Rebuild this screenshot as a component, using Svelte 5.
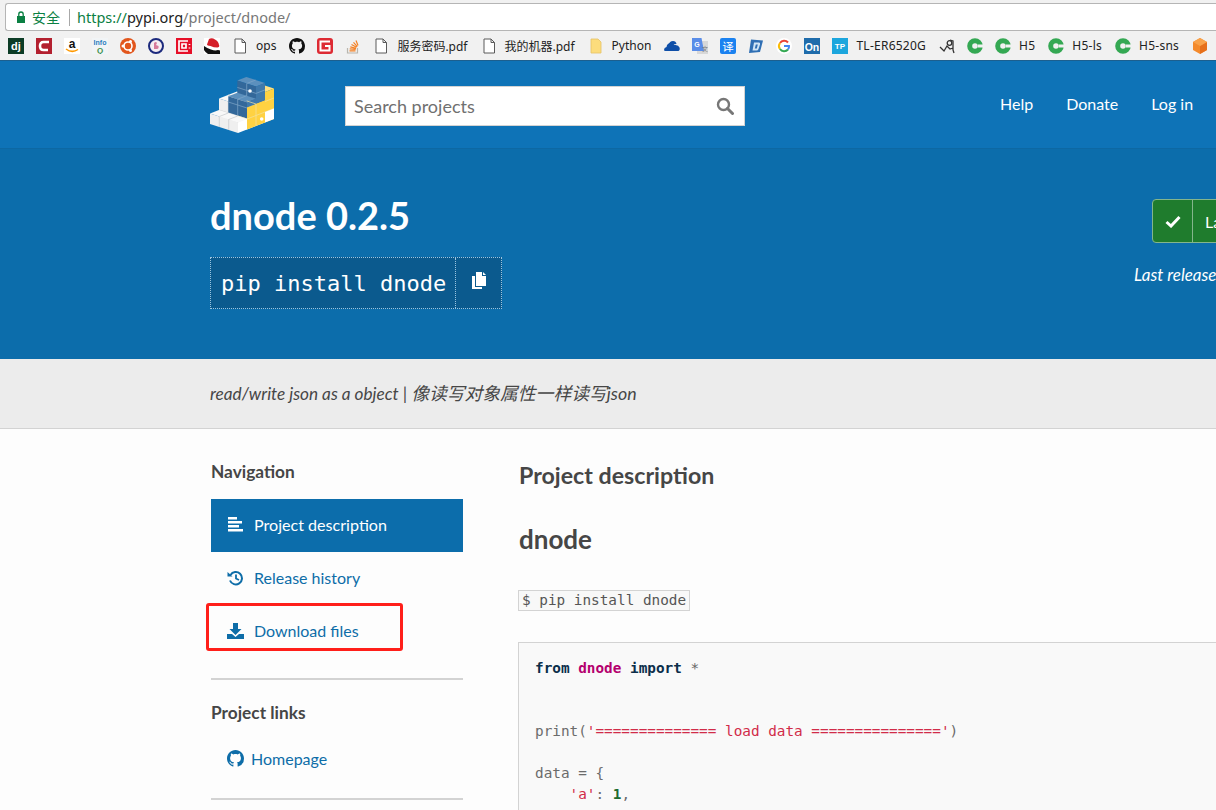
<script>
  const doc = `<svg width="16" height="16" viewBox="0 0 16 16"><path d="M3 1h7l3.500 3.500V15H3z M10 1v3.500h3.500" fill="#fff" stroke="#5a5a5a" stroke-width="1"/></svg>`
  const cIcon = `<svg width="16" height="16" viewBox="0 0 16 16"><circle cx="8" cy="8" r="5.300" fill="none" stroke="#34a853" stroke-width="5"/><rect x="11" y="6.500" width="5" height="3" fill="#f1f1f1"/></svg>`

  const bookmarks = [
    { svg: `<svg width="16" height="16" viewBox="0 0 16 16"><rect width="16" height="16" fill="#0c3c26"/><text x="8" y="12" font-size="11" font-weight="700" text-anchor="middle" fill="#fff" font-family="Liberation Sans">dj</text></svg>` },
    { svg: `<svg width="16" height="16" viewBox="0 0 16 16"><rect width="16" height="16" fill="#b3202f"/><path d="M13 4H7.500Q4 4 4 8t3.500 4H12" fill="none" stroke="#fff" stroke-width="2.600"/></svg>` },
    { svg: `<svg width="16" height="16" viewBox="0 0 16 16"><rect width="16" height="16" fill="#fff"/><text x="8" y="9.500" font-size="12" font-weight="700" text-anchor="middle" fill="#111" font-family="Liberation Sans">a</text><path d="M2 11q6 4.500 12 .5" fill="none" stroke="#f90" stroke-width="1.500"/></svg>` },
    { svg: `<svg width="16" height="16" viewBox="0 0 16 16"><rect width="16" height="16" fill="#f1f4f6"/><text x="8" y="7" font-size="7" font-weight="700" text-anchor="middle" fill="#2c7fc0" font-family="Liberation Sans">Info</text><text x="8" y="15" font-size="8" font-weight="700" text-anchor="middle" fill="#3a8f4a" font-family="Liberation Sans">Q</text></svg>` },
    { svg: `<svg width="16" height="16" viewBox="0 0 16 16"><circle cx="8" cy="8" r="8" fill="#e2561d"/><circle cx="8" cy="8" r="4" fill="none" stroke="#fff" stroke-width="1.600"/><circle cx="3" cy="8" r="1.500" fill="#fff"/><circle cx="10.500" cy="3.600" r="1.500" fill="#fff"/><circle cx="10.500" cy="12.400" r="1.500" fill="#fff"/></svg>` },
    { svg: `<svg width="16" height="16" viewBox="0 0 16 16"><circle cx="8" cy="8" r="7" fill="#f5eef2" stroke="#1c2a7d" stroke-width="2"/><path d="M6 11V5q2-2 3 0l-1 2 2.500 1q.5 3-1.500 3z" fill="#d77a9a"/></svg>` },
    { svg: `<svg width="16" height="16" viewBox="0 0 16 16"><rect width="16" height="16" fill="#e60f28"/><path d="M12 3H3v10h9M6 6h4v4H6zM13.500 6v1M13.500 9.500v1" fill="none" stroke="#fff" stroke-width="1.700"/></svg>` },
    { svg: `<svg width="16" height="16" viewBox="0 0 16 16"><rect width="16" height="16" fill="#fff"/><path d="M0 8q3 2 7 3.500t7 .5l2 .5V16H4q-3-2-4-4z" fill="#111"/><path d="M3 6.500 5 1q3-1.500 6 .5 3.500 1.500 4 5.500 1 2-1.500 2.500-4 0-7-1.500Q3 7.500 3 6.500z" fill="#d5202a"/></svg>` },
    { svg: doc, label: 'ops' },
    { svg: `<svg width="16" height="16" viewBox="0 0 16 16"><path fill="#111" d="M8 0C3.580 0 0 3.580 0 8c0 3.540 2.290 6.530 5.470 7.590.4.070.55-.17.55-.38 0-.19-.01-.82-.01-1.490-2.010.37-2.530-.49-2.690-.94-.09-.23-.48-.94-.82-1.130-.28-.15-.68-.52-.01-.53.63-.01 1.080.58 1.230.82.72 1.210 1.870.87 2.330.66.07-.52.28-.87.51-1.070-1.780-.2-3.640-.89-3.640-3.950 0-.87.31-1.590.82-2.150-.08-.2-.36-1.020.08-2.120 0 0 .67-.21 2.200.82.64-.18 1.320-.27 2-.27.68 0 1.360.09 2 .27 1.530-1.040 2.200-.82 2.200-.82.44 1.100.16 1.920.08 2.120.51.56.82 1.270.82 2.150 0 3.070-1.870 3.750-3.650 3.950.29.25.54.73.54 1.480 0 1.070-.01 1.930-.01 2.200 0 .21.15.46.55.38A8.013 8.013 0 0016 8c0-4.420-3.580-8-8-8z"/></svg>` },
    { svg: `<svg width="16" height="16" viewBox="0 0 16 16"><rect width="16" height="16" rx="3" fill="#dd2a33"/><path d="M13 3.500H3.500v9h9V8H8" fill="none" stroke="#fff" stroke-width="2"/></svg>` },
    { svg: `<svg width="16" height="16" viewBox="0 0 16 16"><path d="M2.500 10v5h10v-5" fill="none" stroke="#b9b6ae" stroke-width="1.200"/><path d="M4.500 12.800h6M4.700 10.800l6 .6M5.300 8.800l5.800 1.500M6.500 6.500l5 2.800M8.500 4.300l3.800 4.300M11 2.500l2 5" fill="none" stroke="#f48024" stroke-width="1.200"/></svg>` },
    { svg: doc, label: '服务密码.pdf' },
    { svg: doc, label: '我的机器.pdf' },
    { svg: `<svg width="16" height="16" viewBox="0 0 16 16"><path d="M3 1h7l3 3v11H3z" fill="#fcdc7c" stroke="#e6c266" stroke-width=".8"/></svg>`, label: 'Python' },
    { svg: `<svg width="16" height="16" viewBox="0 0 16 16"><path d="M0 12q0-2.500 2.500-3 .5-4 4.500-4 2.500 0 3.500 2 4-.5 5 2.500.8 3-1 3.500H1.500Q0 13 0 12z" fill="#0f4fa8"/><path d="M4.500 7Q5.500 3 9 3q3 0 3.500 3" fill="#0f4fa8"/></svg>` },
    { svg: `<svg width="16" height="16" viewBox="0 0 16 16"><rect x="5" y="3" width="11" height="13" fill="#d8d8d8"/><path d="M0 0h9.500l2.500 13H0z" fill="#5a8de8"/><text x="5" y="9" font-size="7" font-weight="700" text-anchor="middle" fill="#fff" font-family="Liberation Sans">G</text><text x="13" y="13" font-size="6" text-anchor="middle" fill="#777" font-family="Noto Sans CJK SC">文</text></svg>` },
    { svg: `<svg width="16" height="16" viewBox="0 0 16 16"><rect width="16" height="16" rx="2" fill="#1b82f0"/><text x="8" y="12.500" font-size="11.500" text-anchor="middle" fill="#fff" font-family="Noto Sans CJK SC">译</text></svg>` },
    { svg: `<svg width="16" height="16" viewBox="0 0 16 16"><path d="M3 1.500 15 2.500 12 14 1 15z" fill="#2f6fb4"/><path d="M6 4.500h5q1.500 0 1 2L10.500 11q-.5 1.500-2 1.500H4.500z" fill="#cfe4f5"/><path d="M7.800 6.500h2l-1 4H6.800z" fill="#2f6fb4"/></svg>` },
    { svg: `<svg width="16" height="16" viewBox="0 0 16 16"><circle cx="8" cy="8" r="8" fill="#fff"/><path d="M12 4.500A5 5 0 0 0 4 5" fill="none" stroke="#ea4335" stroke-width="2"/><path d="M4 5a5 5 0 0 0 0 6" fill="none" stroke="#fbbc05" stroke-width="2"/><path d="M4 11a5 5 0 0 0 8 .5" fill="none" stroke="#34a853" stroke-width="2"/><path d="M12 11.500q1.200-1.500 1-3.500H8" fill="none" stroke="#4285f4" stroke-width="2"/></svg>` },
    { svg: `<svg width="16" height="16" viewBox="0 0 16 16"><rect width="16" height="16" fill="#1f6cab"/><text x="8" y="12.500" font-size="10.500" font-weight="700" text-anchor="middle" fill="#fff" font-family="Liberation Sans">On</text></svg>` },
    { svg: `<svg width="16" height="16" viewBox="0 0 16 16"><rect width="16" height="16" fill="#1ca6dd"/><text x="8" y="11" font-size="8" font-weight="700" text-anchor="middle" fill="#fff" font-family="Liberation Sans">TP</text></svg>`, label: 'TL-ER6520G', wide: true },
    { svg: `<svg width="16" height="16" viewBox="0 0 16 16"><path d="M1 9l4 4 3-5 3 3 3-1M11 2l3 1v9l1 3" fill="none" stroke="#333" stroke-width="1.300"/><circle cx="10.500" cy="5" r="2.300" fill="none" stroke="#333" stroke-width="1.300"/></svg>` },
    { svg: cIcon },
    { svg: cIcon, label: 'H5', wide: true },
    { svg: cIcon, label: 'H5-ls', wide: true },
    { svg: cIcon, label: 'H5-sns', wide: true },
    { svg: `<svg width="16" height="16" viewBox="0 0 16 16"><path d="M8 0l7 4v8l-7 4-7-4V4z" fill="#f48a2c"/><path d="M8 8l7-4v8l-7 4z" fill="#e66f1a"/><path d="M8 0l7 4-7 4-7-4z" fill="#f9a24a"/></svg>` }
  ]

  const code = [
    [['kw', 'from'], ['', ' '], ['ns', 'dnode'], ['', ' '], ['kw', 'import'], ['', ' '], ['op', '*']],
    [],
    [],
    [['', 'print('], ['str', "'============== load data ==============='"], ['', ')']],
    [],
    [['', 'data = {']],
    [['', '    '], ['str', "'a'"], ['', ': '], ['num', '1'], ['', ',']]
  ]

  // isometric projection for the logo's blocks
  const P = (a, b, c) => [33 - 9.33 * a + 9 * b, 62 - 3 * a - 3.5 * b - 10.5 * c]
  const pts = (list) => list.map((p) => P(...p).map((n) => n.toFixed(1)).join(',')).join(' ')

  function box(a0, a1, b0, b1, c0, c1, top, left, right, line) {
    const polys = [
      { points: pts([[a0, b0, c1], [a1, b0, c1], [a1, b1, c1], [a0, b1, c1]]), fill: top },
      { points: pts([[a0, b0, c0], [a1, b0, c0], [a1, b0, c1], [a0, b0, c1]]), fill: left },
      { points: pts([[a0, b0, c0], [a0, b1, c0], [a0, b1, c1], [a0, b0, c1]]), fill: right }
    ]
    const lines = []
    for (let a = a0 + 1; a < a1; a++) {
      lines.push(pts([[a, b0, c0], [a, b0, c1], [a, b1, c1]]))
    }
    for (let b = b0 + 1; b < b1; b++) {
      lines.push(pts([[a0, b, c0], [a0, b, c1], [a1, b, c1]]))
    }
    for (let c = c0 + 1; c < c1 - 0.2; c++) {
      lines.push(pts([[a1, b0, c], [a0, b0, c], [a0, b1, c]]))
    }
    return { polys, lines, line }
  }

  const white = ['#f8f8f8', '#efefef', '#ffffff', '#c6c9cc']
  const blue = ['#5c90bd', '#33689a', '#4079ab', '#7fa6c8']
  const yellow = ['#ffe082', '#ffd242', '#ffd242', '#f3e2a0']
  const yellowFace = ['none', 'none', '#ffd242', '#f3e2a0']

  const blocks = [
    box(0, 3, 1, 3, 0, 2.1, ...white),
    box(0, 1, 3, 4, 0, 2.9, ...yellow),
    box(0, 2, 2, 3, 2.1, 3.76, ...blue),
    box(0, 2, 1, 2, 1.05, 2.6, ...blue),
    box(0, 1, 1, 3, 0, 2.1, ...yellowFace),
    box(0, 1, 3, 4, 0, 1, 'none', 'none', '#ffffff', '#c6c9cc'),
    box(0, 3, 0, 1, 0, 1, ...white)
  ]
</script>

<div class="page">
  <div class="chrome">
    <div class="omnibox">
      <svg class="lock" width="10" height="12" viewBox="0 0 10 12"><path d="M1 5h8v7H1z" fill="#0b8043"/><path d="M2.800 5V3.200a2.200 2.200 0 0 1 4.400 0V5" fill="none" stroke="#0b8043" stroke-width="1.300"/></svg>
      <span class="secure">安全</span>
      <span class="sep"></span>
      <span class="url"><span class="https">https://</span><span class="host">pypi.org</span>/project/dnode/</span>
    </div>
    <div class="bookmarks">
      {#each bookmarks as b}
        <div class="bm" class:labelled={b.label} class:wide={b.wide}>
          <span class="fav">{@html b.svg}</span>
          {#if b.label}<span>{b.label}</span>{/if}
        </div>
      {/each}
    </div>
  </div>

  <header class="topbar">
    <svg class="logo" width="76" height="68" viewBox="0 0 76 68">
      {#each blocks as block}
        {#each block.polys as p}
          <polygon points={p.points} fill={p.fill} />
        {/each}
        {#each block.lines as l}
          <polyline points={l} fill="none" stroke={block.line} stroke-width=".7" />
        {/each}
      {/each}
      <circle cx="45" cy="20" r="1.800" fill="#fff" />
      <circle cx="56.700" cy="48" r="1.800" fill="#fff" />
    </svg>
    <div class="search">
      <span>Search projects</span>
      <svg width="18" height="18" viewBox="0 0 18 18"><circle cx="7.500" cy="7.500" r="5.500" fill="none" stroke="#777" stroke-width="2.400"/><path d="M11.500 11.500 16.500 16.500" stroke="#777" stroke-width="3" stroke-linecap="round"/></svg>
    </div>
    <nav class="topnav">
      <span>Help</span>
      <span>Donate</span>
      <span>Log in</span>
    </nav>
  </header>

  <section class="banner">
    <div class="banner-left">
      <h1>dnode 0.2.5</h1>
      <div class="pip">
        <span class="pip-cmd">pip install dnode</span>
        <span class="pip-copy">
          <svg width="16" height="18" viewBox="0 0 16 18"><path d="M5 0h6v4h4v10H5z" fill="#fff"/><path d="M12 0l3 3h-3z" fill="#fff"/><path d="M1 4h3v11h7v2H1z" fill="#fff"/></svg>
        </span>
      </div>
    </div>
    <div class="banner-right">
      <div class="latest">
        <span class="check">
          <svg width="16" height="13" viewBox="0 0 16 13"><path d="M1.500 7 6 11 14.500 2" fill="none" stroke="#fff" stroke-width="3"/></svg>
        </span>
        <span class="latest-text">Latest version</span>
      </div>
      <div class="released">Last released: Jun 13, 2018</div>
    </div>
  </section>

  <div class="summary"><span>read/write json as a object |</span> <span class="cjk">像读写对象属性一样读写json</span></div>

  <div class="content">
    <aside class="side">
      <h3>Navigation</h3>
      <ul>
        <li class="active">
          <svg width="17" height="15" viewBox="0 0 17 15"><path d="M1 0h9v2.500H1zM1 4h14v2.500H1zM1 8h11v2.500H1zM1 12h15v2.500H1z" fill="#fff"/></svg>
          Project description
        </li>
        <li>
          <svg width="17" height="16" viewBox="0 0 17 16"><path d="M3.500 5A6.200 6.200 0 1 1 3 10.500" fill="none" stroke="#0e6da8" stroke-width="2"/><path d="M.5 2 5.500 6.500H.5z" fill="#0e6da8"/><path d="M9 4.500V8.500L12 10" fill="none" stroke="#0e6da8" stroke-width="1.800"/></svg>
          Release history
        </li>
        <li class="marked">
          <svg width="17" height="16" viewBox="0 0 17 16"><path d="M6 0h5v6h3.500L8.500 12 2.500 6H6z" fill="#0e6da8"/><path d="M0 11h5l3.500 3 3.500-3h5v5H0z" fill="#0e6da8"/></svg>
          Download files
          <span class="annot"></span>
        </li>
      </ul>
      <hr />
      <h3>Project links</h3>
      <ul>
        <li class="tight">
          <svg width="17" height="17" viewBox="0 0 16 16"><path fill="#0e6da8" d="M8 0C3.580 0 0 3.580 0 8c0 3.540 2.290 6.530 5.470 7.590.4.070.55-.17.55-.38 0-.19-.01-.82-.01-1.490-2.010.37-2.530-.49-2.690-.94-.09-.23-.48-.94-.82-1.130-.28-.15-.68-.52-.01-.53.63-.01 1.080.58 1.230.82.72 1.210 1.870.87 2.330.66.07-.52.28-.87.51-1.070-1.780-.2-3.640-.89-3.640-3.950 0-.87.31-1.590.82-2.150-.08-.2-.36-1.020.08-2.120 0 0 .67-.21 2.200.82.64-.18 1.320-.27 2-.27.68 0 1.360.09 2 .27 1.530-1.040 2.200-.82 2.200-.82.44 1.100.16 1.920.08 2.120.51.56.82 1.270.82 2.150 0 3.070-1.870 3.750-3.650 3.950.29.25.54.73.54 1.480 0 1.070-.01 1.930-.01 2.200 0 .21.15.46.55.38A8.013 8.013 0 0016 8c0-4.420-3.580-8-8-8z"/></svg>
          Homepage
        </li>
      </ul>
      <hr />
    </aside>
    <main class="desc">
      <h2>Project description</h2>
      <h2 class="name">dnode</h2>
      <p><code>$ pip install dnode</code></p>
      <pre>{#each code as line}<div class="line">{#each line as [cls, text]}<span class={cls}>{text}</span>{/each}</div>{/each}</pre>
    </main>
  </div>
</div>

<style>
  :global(body) {
    margin: 0;
    background: #fdfdfd;
  }
  .page {
    width: 1216px;
    height: 810px;
    overflow: hidden;
    font-family: Lato, "Noto Sans CJK SC", sans-serif;
    color: #464646;
  }
  .chrome {
    background: #f1f1f1;
    border-bottom: 1px solid #1c5f8e;
    padding-top: 3px;
    height: 57px;
  }
  .omnibox {
    background: #fff;
    border: 1px solid #b5b5b5;
    border-width: 1px 0 1px 1px;
    border-radius: 3px 0 0 3px;
    margin-left: 5px;
    display: flex;
    align-items: center;
    font-family: "Noto Sans", "Noto Sans CJK SC", sans-serif;
    font-size: 14.500px;
    box-sizing: border-box;
    height: 28px;
    padding-left: 10px;
  }
  .lock {
    margin-right: 6px;
  }
  .secure {
    color: #0b8043;
    font-size: 14px;
  }
  .sep {
    width: 1px;
    height: 17px;
    background: #a8a8a8;
    margin: 0 7px 0 9px;
  }
  .url {
    color: #777;
    white-space: nowrap;
  }
  .https {
    color: #0b8043;
  }
  .host {
    color: #222;
  }
  .bookmarks {
    display: flex;
    align-items: center;
    gap: 12px;
    height: 29px;
    padding-left: 8px;
    font-family: "Noto Sans", "Noto Sans CJK SC", sans-serif;
    font-size: 12px;
    color: #222;
    white-space: nowrap;
  }
  .bm {
    display: flex;
    align-items: center;
    gap: 7px;
    flex: none;
  }
  .bm.labelled {
    gap: 8px;
    margin-right: 1px;
  }
  .bm.wide {
    letter-spacing: .25px;
  }
  .fav {
    display: block;
    width: 16px;
    height: 16px;
  }
  .fav :global(svg) {
    display: block;
  }

  .topbar {
    height: 87px;
    background: #0e73b7;
    border-bottom: 1px solid #0d68a3;
    display: flex;
    align-items: center;
    padding-left: 205px;
    color: #fff;
  }
  .logo {
    flex: none;
    margin-right: 64px;
  }
  .search {
    width: 400px;
    height: 40px;
    box-sizing: border-box;
    background: #fff;
    border: 1px solid #d3d3d3;
    display: flex;
    align-items: center;
    justify-content: space-between;
    padding: 0 10px 0 8px;
    font-size: 18px;
    color: #707070;
    flex: none;
    margin-top: 2px;
  }
  .search svg {
    margin-top: 1px;
  }
  .topnav {
    display: flex;
    gap: 33px;
    margin: -2px 0 0 255px;
    font-size: 16px;
    white-space: nowrap;
  }

  .banner {
    height: 210px;
    background: #0c6dab;
    display: flex;
    padding-left: 210px;
    color: #fff;
  }
  .banner-left {
    flex: 0 0 942px;
  }
  h1 {
    margin: 43px 0 19px;
    font-size: 38px;
    line-height: 46px;
    font-weight: 700;
  }
  .pip {
    display: inline-flex;
    height: 52px;
    box-sizing: border-box;
    background: #0b5a8e;
    border: 1px dotted #9cc4df;
    font-family: "DejaVu Sans Mono", monospace;
    font-size: 22px;
    align-items: stretch;
  }
  .pip-cmd {
    padding: 0 9px 0 10px;
    line-height: 52px;
    white-space: nowrap;
  }
  .pip-copy {
    border-left: 1px dotted #9cc4df;
    width: 46px;
    display: flex;
    align-items: center;
    justify-content: center;
    padding-bottom: 4px;
    box-sizing: border-box;
  }
  .banner-right {
    flex: none;
    padding-top: 50px;
  }
  .latest {
    display: flex;
    width: 200px;
    height: 44px;
    box-sizing: border-box;
    background: #1f7c2d;
    border: 1px solid #84b58c;
    border-radius: 4px;
    font-size: 16px;
    align-items: center;
  }
  .check {
    width: 40px;
    height: 100%;
    border-right: 1px solid #84b58c;
    display: flex;
    align-items: center;
    justify-content: center;
    box-sizing: border-box;
  }
  .latest-text {
    padding-left: 12px;
    white-space: nowrap;
  }
  .released {
    margin: 21px 0 0 -18px;
    font-size: 17px;
    font-style: italic;
    white-space: nowrap;
  }

  .summary {
    height: 70px;
    box-sizing: border-box;
    background: #ececec;
    border-bottom: 1px solid #d3d3d3;
    padding: 22px 0 0 210px;
    font-size: 17.200px;
    font-style: italic;
    line-height: 24px;
  }
  .cjk {
    font-size: 17.800px;
  }

  .content {
    display: flex;
    padding: 31px 0 0 211px;
  }
  .side {
    flex: 0 0 252px;
    margin-right: 55px;
  }
  h3 {
    margin: 0;
    font-size: 17.300px;
    line-height: 24px;
    font-weight: 700;
    color: #464646;
  }
  ul {
    list-style: none;
    margin: 15px 0 0;
    padding: 0;
  }
  li {
    position: relative;
    height: 53px;
    box-sizing: border-box;
    padding: 0 0 2px 16px;
    display: flex;
    align-items: center;
    gap: 10px;
    font-size: 16px;
    color: #0e6da8;
    white-space: nowrap;
  }
  li.tight {
    gap: 7px;
    height: 40px;
    margin-top: -2px;
    padding-bottom: 0;
  }
  li.active {
    background: #0c6dab;
    color: #fff;
    font-size: 16.100px;
  }
  .annot {
    position: absolute;
    left: -5px;
    top: -2px;
    width: 197px;
    height: 48px;
    box-sizing: border-box;
    border: 3px solid #ff1f1a;
    border-radius: 3px;
  }
  hr {
    border: 0;
    height: 2px;
    background: #d3d3d3;
    margin: 20px 0 21px;
  }
  .desc {
    flex: none;
    width: 760px;
    margin-top: -1px;
  }
  h2 {
    margin: 0 0 0 1px;
    font-size: 23.200px;
    line-height: 32px;
    font-weight: 700;
    color: #464646;
  }
  h2.name {
    margin-top: 32px;
    font-size: 26px;
  }
  p {
    margin: 33px 0 0;
    line-height: 21px;
  }
  code {
    display: inline-block;
    font-family: "DejaVu Sans Mono", monospace;
    font-size: 14.350px;
    line-height: 19px;
    background: #f8f8f8;
    border: 1px solid #d3d3d3;
    padding: 0 3px;
    color: #555;
  }
  pre {
    margin: 31px 0 0;
    background: #f9f9f9;
    border: 1px solid #d3d3d3;
    border-width: 1px 0 1px 1px;
    padding: 15px 16px;
    font-family: "DejaVu Sans Mono", monospace;
    font-size: 14.350px;
    line-height: 21px;
    color: #6b6b6b;
  }
  .line {
    height: 21px;
    white-space: pre;
  }
  .kw {
    color: #0b2e4a;
    font-weight: 700;
  }
  .ns {
    color: #b5006e;
    font-weight: 700;
  }
  .op {
    color: #666;
  }
  .str {
    color: #d12c49;
  }
  .num {
    color: #1d6b2f;
    font-weight: 700;
  }
</style>
